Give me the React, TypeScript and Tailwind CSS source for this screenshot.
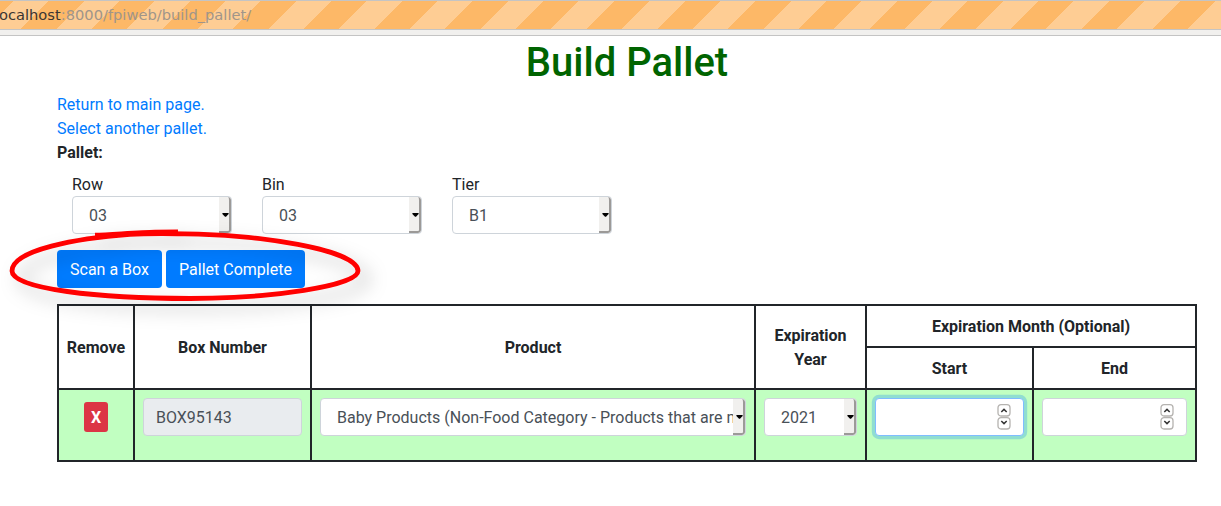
import type { ReactNode } from "react";

function Caret() {
  return (
    <svg width="7" height="4" viewBox="0 0 7 4" className="block">
      <path d="M0.4 0h6.2v0.9L4 3.7H3L0.4 0.9z" fill="#000" />
    </svg>
  );
}

function Select({ value, className }: { value: string; className: string }) {
  return (
    <div className={`flex h-[38px] overflow-hidden rounded border border-[#ced4da] bg-white text-[#495057] ${className}`}>
      <div className="min-w-0 flex-1 overflow-hidden pt-[7px] pl-4 leading-6 whitespace-nowrap">{value}</div>
      <div className="flex w-3 shrink-0 items-center justify-end rounded-r-[3px] border-r-2 border-b-2 border-[#9c9a98] bg-[#f1f0ee] pt-[2px]">
        <Caret />
      </div>
    </div>
  );
}

function SpinButton({ down = false }: { down?: boolean }) {
  return (
    <svg width="14" height="13" viewBox="0 0 14 13" className="block">
      <rect x="1" y="0.7" width="12" height="11.3" rx="3" fill="#fff" stroke="#b5b3b0" strokeWidth="1.3" />
      <path d={down ? "M4.3 4L7 6.6l2.7-2.6" : "M4.3 8L7 5.4 9.7 8"} fill="none" stroke="#333" strokeWidth="1.5" />
    </svg>
  );
}

function NumberInput({ focused = false }: { focused?: boolean }) {
  return (
    <div
      className={`flex h-[38px] flex-col items-end justify-center rounded border bg-white pr-3 ${
        focused ? "border-[#80bdff] shadow-[0_0_0_3.2px_rgba(0,123,255,0.25)]" : "border-[#ced4da]"
      }`}
    >
      <SpinButton />
      <SpinButton down />
    </div>
  );
}

function Field({ label, value }: { label: string; value: string }) {
  return (
    <div className="w-[160px]">
      <div className="h-[23px] leading-6">{label}</div>
      <Select value={value} className="w-[160px]" />
    </div>
  );
}

function Head({ children, className = "" }: { children: ReactNode; className?: string }) {
  return <div className={`flex items-center justify-center bg-white pt-[2px] text-center font-bold ${className}`}>{children}</div>;
}

function Cell({ children }: { children: ReactNode }) {
  return <div className="bg-[#c1ffc1] px-2 pt-2">{children}</div>;
}

function Highlight() {
  return (
    <svg width="400" height="120" viewBox="0 220 400 120" className="pointer-events-none absolute -top-[30px] -left-[57px]">
      <defs>
        <filter id="soft" x="-20%" y="-60%" width="150%" height="240%">
          <feDropShadow dx="9" dy="9" stdDeviation="9" floodColor="#000" floodOpacity="0.26" />
        </filter>
      </defs>
      <g fill="none" stroke="#f00" strokeWidth="4.8" filter="url(#soft)">
        <path d="M95 235.2C112 234.6 140 232.4 155 232.2L178 232" />
        <path d="M178 233.8C150 233.5 140 233.8 130 234.4C78 238 12 250 12 271C12 289 100 298.5 190 298.5C270 298.5 358 286 358 271C358 250 260 233.5 170 233.6" />
      </g>
    </svg>
  );
}

export default function App() {
  return (
    <div className="h-[506px] w-full overflow-hidden bg-white font-['Roboto',sans-serif] text-base leading-6 text-[#212529]">
      <div className="h-9 border-y border-[#c4c4c4] bg-[#f1f0ee]">
        <div className="h-[29px] border-b border-[#c4c4c4] bg-[repeating-linear-gradient(135deg,#fdb867_0px,#fdb867_9.4px,#fecd94_9.4px,#fecd94_34.4px,#fdb867_34.4px,#fdb867_50px)]">
          <div className="-ml-px font-['DejaVu_Sans',sans-serif] text-[14.667px] leading-[28px] whitespace-nowrap text-[#a0958a]">
            <span className="text-[#3b3532]">ocalhost</span>:8000/fpiweb/build_pallet/
          </div>
        </div>
      </div>

      <div className="ml-[57px] w-[1140px]">
        <h1 className="mb-[6px] pt-[3px] text-center text-[40px] leading-[48px] font-medium text-[#006400]">Build Pallet</h1>
        <div className="text-[#007bff]">
          <a className="block w-fit">Return to main page.</a>
          <a className="block w-fit">Select another pallet.</a>
        </div>
        <div className="font-bold">Pallet:</div>

        <div className="mt-2 flex gap-[30px] pl-[15px]">
          <Field label="Row" value="03" />
          <Field label="Bin" value="03" />
          <Field label="Tier" value="B1" />
        </div>

        <div className="relative mt-4 flex gap-1">
          <button className="h-[38px] w-[105px] rounded bg-[#007bff] pt-[2px] text-white">Scan a Box</button>
          <button className="h-[38px] w-[139px] rounded bg-[#007bff] pt-[2px] text-white">Pallet Complete</button>
          <Highlight />
        </div>

        <div className="mt-4 grid grid-cols-[74px_175px_442px_109px_165px_161px] grid-rows-[40px_40px_70px] gap-[2px] border-2 border-[#212529] bg-[#212529]">
          <Head className="row-span-2">Remove</Head>
          <Head className="row-span-2">Box Number</Head>
          <Head className="row-span-2">Product</Head>
          <Head className="row-span-2 px-4">Expiration Year</Head>
          <Head className="col-span-2">Expiration Month (Optional)</Head>
          <Head>Start</Head>
          <Head>End</Head>
          <Cell>
            <div className="flex justify-center pt-1">
              <button className="h-[30px] w-6 rounded-[3px] bg-[#dc3545] pt-[2px] font-bold text-white">X</button>
            </div>
          </Cell>
          <Cell>
            <div className="h-[38px] rounded border border-[#ced4da] bg-[#e9ecef] px-3 pt-[7px] leading-6 text-[#495057]">BOX95143</div>
          </Cell>
          <Cell>
            <Select value="Baby Products (Non-Food Category - Products that are not" className="w-full" />
          </Cell>
          <Cell>
            <Select value="2021" className="w-full" />
          </Cell>
          <Cell>
            <NumberInput focused />
          </Cell>
          <Cell>
            <NumberInput />
          </Cell>
        </div>
      </div>
    </div>
  );
}
